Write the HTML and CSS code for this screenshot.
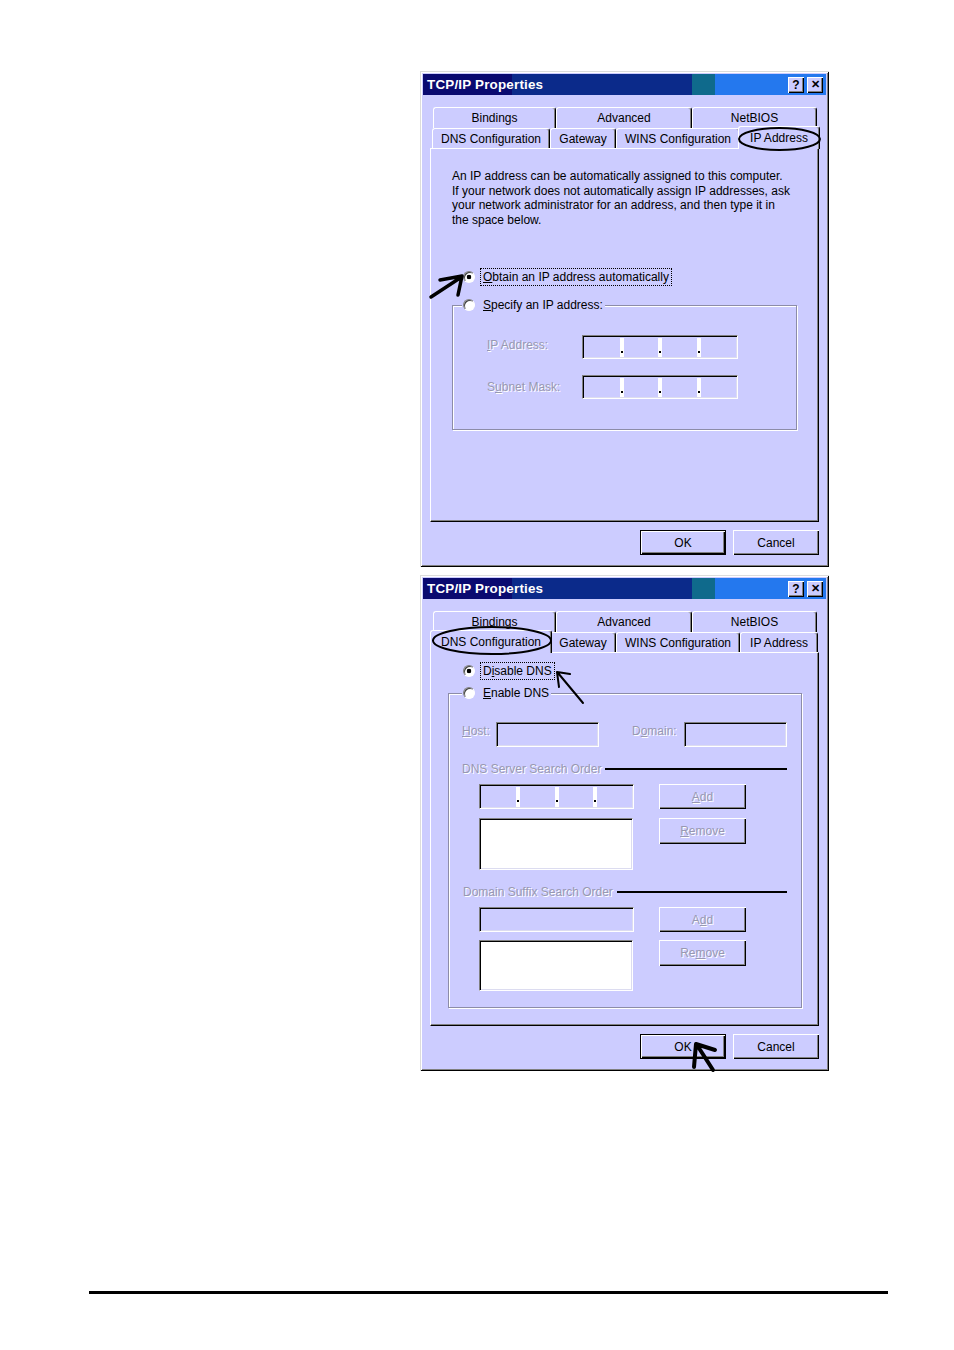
FILE: index.html
```html
<!DOCTYPE html>
<html lang="en">
<head>
<meta charset="utf-8">
<title>TCP/IP Properties</title>
<link rel="stylesheet" href="styles.css">
</head>
<body>
<main class="page">
  <div class="dialogs">
    <!-- Dialog 1: IP Address -->
    <section class="dialog">
      <div class="titlebar">
        <span class="title">TCP/IP Properties</span>
        <div class="tbtns"><span class="tbtn">?</span><span class="tbtn x">✕</span></div>
      </div>
      <div class="tabs">
        <div class="tabrow back">
          <div class="tab t-bind">Bindings</div>
          <div class="tab t-adv">Advanced</div>
          <div class="tab t-nb">NetBIOS</div>
        </div>
        <div class="tabrow front">
          <div class="tab t-dns">DNS Configuration</div>
          <div class="tab t-gw">Gateway</div>
          <div class="tab t-wins">WINS Configuration</div>
          <div class="tab t-ip sel">IP Address</div>
        </div>
      </div>
      <div class="panel p-ip">
        <p class="intro">An IP address can be automatically assigned to this computer.<br>If your network does not automatically assign IP addresses, ask<br>your network administrator for an address, and then type it in<br>the space below.</p>
        <div class="opt o-ip"><span class="radio on"></span><span class="lbl focus"><u>O</u>btain an IP address automatically</span></div>
        <div class="group g-ip">
          <div class="legend"><span class="radio"></span><span class="lbl"><u>S</u>pecify an IP address:</span></div>
          <div class="fieldgrid">
            <span class="dis up"><u>I</u>P Address:</span>
            <div class="ipfield sunk"><span class="seg"></span><span class="sep"></span><span class="seg"></span><span class="sep"></span><span class="seg"></span><span class="sep"></span><span class="seg"></span></div>
            <span class="dis">S<u>u</u>bnet Mask:</span>
            <div class="ipfield sunk"><span class="seg"></span><span class="sep"></span><span class="seg"></span><span class="sep"></span><span class="seg"></span><span class="sep"></span><span class="seg"></span></div>
          </div>
        </div>
      </div>
      <div class="actions">
        <button class="btn default">OK</button>
        <button class="btn">Cancel</button>
      </div>
      <svg class="annot" viewBox="0 0 409 496" width="409" height="496">
        <ellipse cx="359.5" cy="68" rx="40.5" ry="11" fill="none" stroke="#000" stroke-width="2"/>
        <path d="M11 226 L40 207 M20 209 L42 205 L38 224" fill="none" stroke="#000" stroke-width="3.5" stroke-linecap="round" stroke-linejoin="round"/>
      </svg>
    </section>

    <!-- Dialog 2: DNS Configuration -->
    <section class="dialog">
      <div class="titlebar">
        <span class="title">TCP/IP Properties</span>
        <div class="tbtns"><span class="tbtn">?</span><span class="tbtn x">✕</span></div>
      </div>
      <div class="tabs">
        <div class="tabrow back">
          <div class="tab t-bind">Bindings</div>
          <div class="tab t-adv">Advanced</div>
          <div class="tab t-nb">NetBIOS</div>
        </div>
        <div class="tabrow front">
          <div class="tab t-dns sel">DNS Configuration</div>
          <div class="tab t-gw">Gateway</div>
          <div class="tab t-wins">WINS Configuration</div>
          <div class="tab t-ip">IP Address</div>
        </div>
      </div>
      <div class="panel p-dns">
        <div class="opt o-dns"><span class="radio on"></span><span class="lbl focus">D<u>i</u>sable DNS</span></div>
        <div class="group g-dns">
          <div class="legend"><span class="radio"></span><span class="lbl"><u>E</u>nable DNS</span></div>
          <div class="hostrow">
            <span class="dis l-host"><u>H</u>ost:</span>
            <div class="txt sunk"></div>
            <span class="dis l-dom">D<u>o</u>main:</span>
            <div class="txt sunk"></div>
          </div>
          <div class="heading h-server"><span class="dis">DNS Server Search Order</span><span class="rule-line"></span></div>
          <div class="listblock">
            <div class="ipfield sunk wide"><span class="seg"></span><span class="sep"></span><span class="seg"></span><span class="sep"></span><span class="seg"></span><span class="sep"></span><span class="seg"></span></div>
            <button class="btn small dis-btn"><u>A</u>dd</button>
            <div class="listbox sunk"></div>
            <button class="btn small tall dis-btn"><u>R</u>emove</button>
          </div>
          <div class="heading h-suffix"><span class="dis">Domain Suffix Search Order</span><span class="rule-line"></span></div>
          <div class="listblock lb2">
            <div class="txt sunk wide"></div>
            <button class="btn small dis-btn">A<u>d</u>d</button>
            <div class="listbox sunk short"></div>
            <button class="btn small tall dis-btn">Re<u>m</u>ove</button>
          </div>
        </div>
      </div>
      <div class="actions">
        <button class="btn default">OK</button>
        <button class="btn">Cancel</button>
      </div>
      <svg class="annot" viewBox="0 0 409 496" width="409" height="496">
        <ellipse cx="72" cy="65.5" rx="59" ry="13.5" fill="none" stroke="#000" stroke-width="2"/>
        <path d="M163 128 L138 98 M150 99 L137 97 L139 112" fill="none" stroke="#000" stroke-width="2" stroke-linecap="round" stroke-linejoin="round"/>
        <path d="M293 495 L277 470 M295 475 L276 469 L274 492" fill="none" stroke="#000" stroke-width="4" stroke-linecap="round" stroke-linejoin="round"/>
      </svg>
    </section>
  </div>
  <div class="rule"></div>
</main>
</body>
</html>
```

FILE: styles.css
```css
* { box-sizing: border-box; }

body {
  margin: 0;
  background: #fff;
  font-family: "Liberation Sans", Arial, sans-serif;
  font-size: 12px;
  color: #000;
}

.page {
  padding-top: 71px;
  display: flex;
  flex-direction: column;
}

.dialogs {
  margin-left: 420px;
  display: flex;
  flex-direction: column;
  gap: 8px;
}

.dialog {
  position: relative;
  width: 409px;
  height: 496px;
  padding: 3px;
  background: #ccccff;
  box-shadow: inset 1px 1px 0 #dcdcdc, inset -1px -1px 0 #000, inset 2px 2px 0 #fff, inset -2px -2px 0 #808080;
  display: flex;
  flex-direction: column;
}

/* title bar */
.titlebar {
  height: 21px;
  display: flex;
  align-items: center;
  justify-content: space-between;
  padding: 0 3px 0 4px;
  color: #fff;
  background: linear-gradient(to right, #0a0a70 0 89px, #0b2a8a 89px 269px, #0f6a8c 269px 292px, #2478ee 292px);
}

.title {
  font-weight: bold;
  font-size: 13.4px;
  letter-spacing: 0.2px;
}

.tbtns { display: flex; gap: 3px; }

.tbtn {
  width: 16px;
  height: 16px;
  background: #ccccff;
  color: #000;
  font-weight: bold;
  font-size: 12px;
  display: flex;
  align-items: center;
  justify-content: center;
  box-shadow: inset 1px 1px 0 #fff, inset -1px -1px 0 #000, inset -2px -2px 0 #808080;
}

.tbtn.x { font-size: 11px; }

/* tabs */
.tabs {
  margin-top: 12px;
  display: flex;
  flex-direction: column;
}

.tabrow { display: flex; }
.tabrow.back { height: 21px; padding-left: 10px; }
.tabrow.front { height: 20px; padding-left: 9px; }

.tab {
  width: var(--w);
  border-top: 1px solid #fff;
  border-left: 1px solid #fff;
  border-right: 1px solid #000;
  border-radius: 3px 3px 0 0;
  box-shadow: inset -1px 0 0 #808080;
  display: flex;
  align-items: center;
  justify-content: center;
  background: #ccccff;
}

.t-bind { --w: 123px; }
.t-adv  { --w: 136px; }
.t-nb   { --w: 125px; }
.t-dns  { --w: 118px; }
.t-gw   { --w: 66px; }
.t-wins { --w: 124px; }
.t-ip   { --w: 78px; }

.tab.sel {
  position: relative;
  z-index: 1;
  width: calc(var(--w) + 4px);
  margin: -2px -2px -1px;
  height: 23px;
}

/* panel */
.panel {
  margin: 0 7px;
  height: 374px;
  border: 1px solid;
  border-color: #fff #000 #000 #fff;
  box-shadow: inset -1px -1px 0 #808080;
  display: flex;
  flex-direction: column;
  align-items: flex-start;
}

.p-ip { padding: 20px 0 0 21px; }
.p-dns { padding: 9px 0 0 17px; }

.intro {
  margin: 0;
  line-height: 14.7px;
}

/* radio options */
.opt, .legend {
  height: 18px;
  display: flex;
  align-items: center;
}

.o-ip { margin: 40px 0 0 11px; }
.o-dns { margin: 0 0 0 15px; }

.radio {
  width: 12px;
  height: 12px;
  border-radius: 50%;
  background: #fff;
  border: 1px solid;
  border-color: #808080 #fff #fff #808080;
  box-shadow: inset 1px 1px 0 #404040;
  flex: none;
}

.radio.on {
  background: radial-gradient(circle, #000 0 2px, #fff 2.6px);
}

.lbl {
  margin-left: 6px;
  padding: 1px 2px;
  line-height: 14px;
}

.lbl.focus { outline: 1px dotted #000; outline-offset: 0; }

/* group boxes */
.group {
  border: 1px solid #8c8ca8;
  box-shadow: inset 1px 1px 0 #fff, 1px 1px 0 #fff;
  display: flex;
  flex-direction: column;
  align-items: flex-start;
}

.legend {
  margin-top: -10px;
  padding: 0 2px 0 1px;
  background: #ccccff;
}

.legend .lbl { padding-left: 2px; padding-right: 0; }

.g-ip {
  margin-top: 19px;
  width: 345px;
  height: 125px;
}
.g-ip .legend { margin-left: 9px; }

.g-dns {
  margin-top: 13px;
  width: 354px;
  height: 315px;
}
.g-dns .legend { margin-left: 13px; }

.dis {
  color: #9898b2;
  text-shadow: 1px 1px 0 #fff;
}

.up { margin-top: -4px; }

.fieldgrid {
  margin-top: 21px;
  padding-left: 34px;
  display: grid;
  grid-template-columns: 95px 156px;
  grid-auto-rows: 24px;
  row-gap: 16px;
  align-items: center;
}

/* sunken fields */
.sunk {
  border: 1px solid;
  border-color: #808080 #fff #fff #808080;
  box-shadow: inset 1px 1px 0 #000, inset -1px -1px 0 #dcdcf0;
}

.ipfield {
  height: 24px;
  display: flex;
  padding: 2px 2px 1px 2px;
  background: #ccccff;
}

.ipfield.wide { width: 155px; height: 25px; }

.seg { flex: 1; }

.sep {
  width: 4px;
  background: linear-gradient(#000, #000) 1px 13px / 2px 2px no-repeat, #fff;
}

.txt {
  width: 103px;
  height: 25px;
  background: #ccccff;
}

.txt.wide { width: 155px; }

.listbox {
  width: 154px;
  height: 52px;
  background: #fff;
}

.listbox.short { height: 51px; }

.hostrow {
  margin-top: 20px;
  padding-left: 13px;
  display: flex;
  align-items: flex-start;
}

.hostrow .dis { margin-top: 2px; line-height: 14px; }

.l-host { width: 34px; }
.hostrow .l-dom { width: 52px; margin-left: 33px; }

.heading {
  display: flex;
  align-items: center;
  height: 14px;
  width: 338px;
}

.h-server { margin-top: 15px; padding-left: 13px; }
.h-suffix { margin-top: 15px; padding-left: 14px; }

.rule-line {
  flex: 1;
  height: 2px;
  margin-left: 4px;
  background: #000;
}

.listblock {
  margin-top: 8px;
  padding-left: 30px;
  display: grid;
  grid-template-columns: 155px 87px;
  column-gap: 25px;
  row-gap: 9px;
  align-items: start;
}

.listblock.lb2 { row-gap: 8px; }

/* buttons */
.btn {
  width: 86px;
  height: 25px;
  border: none;
  padding: 0;
  font: inherit;
  color: #000;
  background: #ccccff;
  box-shadow: inset 1px 1px 0 #fff, inset -1px -1px 0 #000, inset -2px -2px 0 #808080;
}

.btn.default {
  box-shadow: inset 0 0 0 1px #000, inset 2px 2px 0 #fff, inset -2px -2px 0 #000, inset -3px -3px 0 #808080;
}

.btn.small { width: 87px; }
.btn.tall { height: 26px; }

.dis-btn {
  color: #9898b2;
  text-shadow: 1px 1px 0 #fff;
}

.actions {
  margin-top: 8px;
  padding-right: 7px;
  display: flex;
  justify-content: flex-end;
  gap: 7px;
}

/* hand-drawn annotations over the dialog */
.annot {
  position: absolute;
  left: 0;
  top: 0;
  overflow: visible;
  pointer-events: none;
  z-index: 5;
}

.rule {
  margin: 220px 0 0 89px;
  width: 799px;
  height: 3px;
  background: #000;
}
```
